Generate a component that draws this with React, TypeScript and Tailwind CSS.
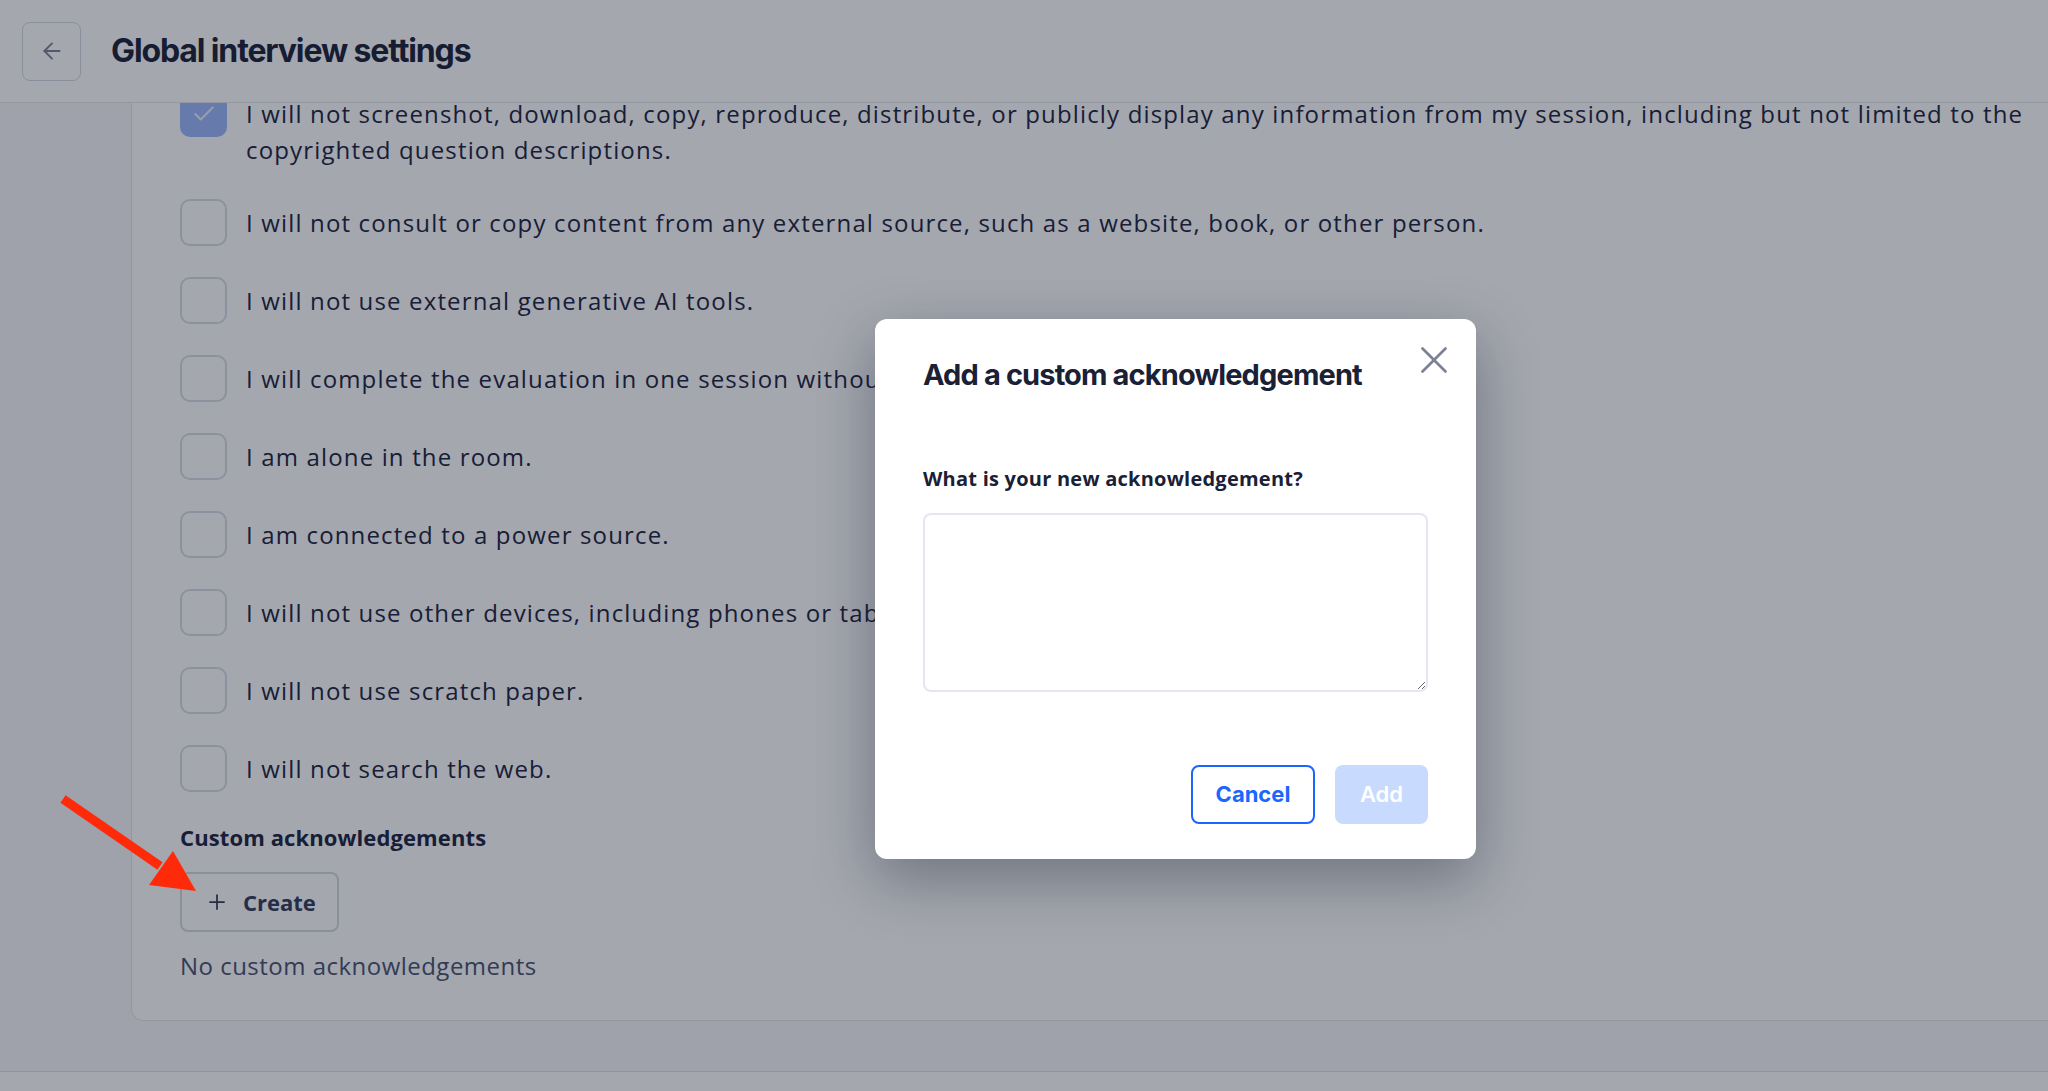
import { ArrowLeft, Plus, X, Check } from "lucide-react";

// Acknowledgements shown in the interview settings checklist
const acknowledgements: { text: string; checked: boolean }[] = [
  {
    text: "I will not screenshot, download, copy, reproduce, distribute, or publicly display any information from my session, including but not limited to the copyrighted question descriptions.",
    checked: true,
  },
  { text: "I will not consult or copy content from any external source, such as a website, book, or other person.", checked: false },
  { text: "I will not use external generative AI tools.", checked: false },
  { text: "I will complete the evaluation in one session without interruption.", checked: false },
  { text: "I am alone in the room.", checked: false },
  { text: "I am connected to a power source.", checked: false },
  { text: "I will not use other devices, including phones or tablets.", checked: false },
  { text: "I will not use scratch paper.", checked: false },
  { text: "I will not search the web.", checked: false },
];

const bodyFont = "font-['Open_Sans',sans-serif]";
const headFont = "font-['Inter',sans-serif]";

export default function App() {
  return (
    <div className={`relative h-screen w-full overflow-hidden bg-[#f7f7fa] text-[#1c2240] ${bodyFont}`}>
      <div className="flex h-full flex-col">
        {/* Top bar */}
        <header className="relative z-10 flex h-[103px] shrink-0 items-center gap-[30px] border-b border-[#e3e5ec] bg-white px-[22px]">
          <button className="flex h-[59px] w-[59px] items-center justify-center rounded-lg border border-[#d6d9e2] text-[#7c8294]">
            <ArrowLeft size={26} strokeWidth={1.75} />
          </button>
          <h1 className={`${headFont} text-[32px] font-bold tracking-[-0.035em] text-[#1a2036]`}>Global interview settings</h1>
        </header>

        {/* Scrolled settings card */}
        <main className="flex-1 overflow-hidden pl-[131px]">
          <section className="-mt-[13px] w-[1960px] rounded-bl-xl border-b border-l border-[#e3e5ec] bg-white px-[48px] pb-[36px]">
            <ul className="flex flex-col gap-[31px]">
              {acknowledgements.map((item, i) => (
                <li key={i} className="flex items-start gap-[19px]">
                  {item.checked ? (
                    <span className="flex h-[47px] w-[47px] shrink-0 items-center justify-center rounded-[10px] bg-[#9bb6fb] text-[#e8eeff]">
                      <Check size={26} strokeWidth={2} />
                    </span>
                  ) : (
                    <span className="h-[47px] w-[47px] shrink-0 rounded-[10px] border-2 border-[#d9dce6] bg-white" />
                  )}
                  <p className="pt-[6px] text-[24px] leading-[36px] tracking-[0.048em]">{item.text}</p>
                </li>
              ))}
            </ul>

            <h2 className="mt-[30px] text-[22px] font-bold leading-[30px] tracking-[0.005em]">Custom acknowledgements</h2>
            <button className="mt-[20px] flex h-[60px] w-[159px] items-center gap-[14px] rounded-lg border-2 border-[#d6d9e2] pl-[23px] text-[22px] font-bold text-[#333a5a]">
              <Plus size={24} strokeWidth={1.75} />
              Create
            </button>
            <p className="mt-[16px] text-[24px] leading-[36px] tracking-[0.02em] text-[#4a5170]">No custom acknowledgements</p>
          </section>
          <div className="h-[51px]" />
        </main>
        <footer className="h-[20px] shrink-0 border-t border-[#e0e2ea] bg-white" />
      </div>

      {/* Dimmed backdrop */}
      <div className="absolute inset-0 z-20 bg-[#0f172a]/[0.38]" />

      {/* Dialog */}
      <div className="absolute left-[875px] top-[319px] z-30 flex h-[540px] w-[601px] flex-col rounded-xl bg-white px-[48px] pb-[35px] pt-[38px] shadow-[0_20px_60px_rgba(15,23,42,0.35)]">
        <button className="absolute right-[19px] top-[18px] text-[#7a8194]">
          <X size={46} strokeWidth={1.4} />
        </button>
        <h3 className={`${headFont} text-[29px] font-bold leading-[36px] tracking-[-0.03em] text-[#1a2036]`}>Add a custom acknowledgement</h3>
        <label className="mt-[72px] text-[20px] font-bold leading-[28px] tracking-[0.012em] text-[#1a2036]">What is your new acknowledgement?</label>
        <textarea className="mt-[20px] h-[179px] w-full rounded-lg border-2 border-[#e5e7ef] outline-none" />
        <div className="mt-[73px] flex justify-end gap-[20px]">
          <button className={`${headFont} h-[59px] w-[124px] rounded-lg border-2 border-[#1a66ff] text-[22px] font-bold text-[#1a66ff]`}>Cancel</button>
          <button className={`${headFont} h-[59px] w-[93px] rounded-lg bg-[#c8dafd] text-[22px] font-semibold text-white`}>Add</button>
        </div>
      </div>

      {/* Red pointer toward the Create button */}
      <svg className="absolute left-0 top-0 z-40" width="260" height="960" viewBox="0 0 260 960">
        <line x1="63" y1="799" x2="160" y2="866" stroke="#ff2a0a" strokeWidth="9" strokeLinecap="butt" />
        <polygon points="196,891 149,885 173,851" fill="#ff2a0a" />
      </svg>
    </div>
  );
}
